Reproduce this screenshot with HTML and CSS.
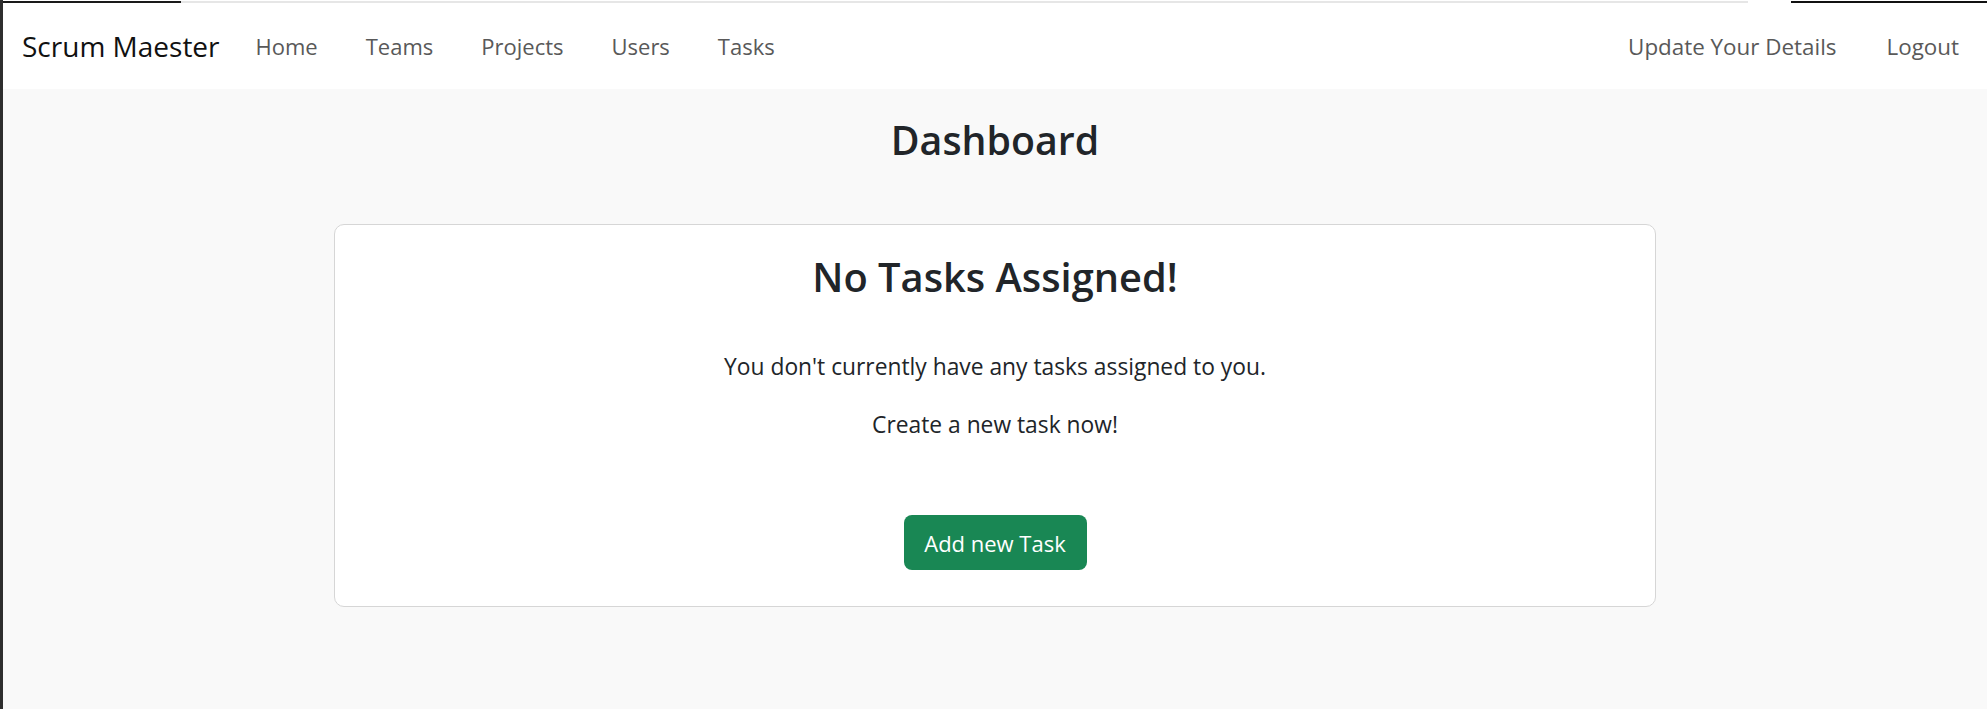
FILE: index.html
```html
<!DOCTYPE html>
<html lang="en">
<head>
<meta charset="utf-8">
<title>Scrum Maester</title>
<link rel="stylesheet" href="styles.css">
</head>
<body>
<div class="frame">
  <div class="side-strip"></div>
  <div class="page">
    <div class="top-strip"></div>
    <nav class="navbar">
      <a class="brand" href="#">Scrum Maester</a>
      <ul class="nav-links">
        <li><a href="#">Home</a></li>
        <li><a href="#">Teams</a></li>
        <li><a href="#">Projects</a></li>
        <li><a href="#">Users</a></li>
        <li><a href="#">Tasks</a></li>
      </ul>
      <ul class="nav-links nav-right">
        <li><a href="#">Update Your Details</a></li>
        <li><a href="#">Logout</a></li>
      </ul>
    </nav>
    <main class="content">
      <h2 class="page-title">Dashboard</h2>
      <section class="card">
        <h2 class="card-title">No Tasks Assigned!</h2>
        <p class="first">You don't currently have any tasks assigned to you.</p>
        <p>Create a new task now!</p>
        <a class="btn-success" href="#">Add new Task</a>
      </section>
    </main>
  </div>
</div>
</body>
</html>
```

FILE: styles.css
```css
* { box-sizing: border-box; }

html, body {
  margin: 0;
  padding: 0;
  height: 100%;
}

body {
  font-family: "Open Sans", "Noto Sans", sans-serif;
  font-size: 22px;
  color: #212529;
  background: #f9f9f9;
}

.frame {
  display: flex;
  min-height: 709px;
}

.side-strip {
  width: 3px;
  flex: 0 0 3px;
  background: #2e2e2e;
}

.page {
  flex: 1;
  display: flex;
  flex-direction: column;
}

.top-strip {
  height: 3px;
  background:
    linear-gradient(to bottom, #ffffff 0, #ffffff 1px, transparent 1px),
    linear-gradient(to right, #1a1a1a 0, #1a1a1a 178px, #e6e6e6 178px, #e6e6e6 1745px, #ffffff 1745px, #ffffff 1788px, #111111 1788px);
}

.navbar {
  height: 86px;
  background: #ffffff;
  display: flex;
  align-items: center;
  padding: 0 18px 0 19px;
}

.brand {
  font-size: 28px;
  color: #111111;
  text-decoration: none;
  margin-right: 36px;
}

.nav-links {
  list-style: none;
  margin: 0;
  padding: 0;
  display: flex;
  gap: 48px;
}

.nav-links a {
  color: #595959;
  text-decoration: none;
  font-size: 22px;
}

.nav-right {
  margin-left: auto;
  margin-right: 10px;
}

.nav-right a {
  font-size: 22.4px;
}

.nav-right li:first-child {
  margin-right: 2px;
}

.content {
  display: flex;
  flex-direction: column;
  align-items: center;
  padding-top: 25px;
}

.page-title {
  margin: 0;
  font-size: 39.3px;
  font-weight: 600;
  line-height: 52px;
}

.card {
  margin-top: 58px;
  width: 1322px;
  background: #ffffff;
  border: 1px solid #d6d6d6;
  border-radius: 10px;
  display: flex;
  flex-direction: column;
  align-items: center;
  padding: 26px 24px 36px;
}

.card-title {
  margin: 0;
  font-size: 39.8px;
  font-weight: 600;
  line-height: 52px;
}

.card p {
  margin: 0;
  line-height: 36px;
  font-size: 22.8px;
}

.card p.first {
  margin-top: 46px;
  margin-bottom: 22px;
}

.btn-success {
  margin-top: 72px;
  display: inline-flex;
  align-items: center;
  justify-content: center;
  width: 183px;
  height: 55px;
  background: #198754;
  color: #ffffff;
  text-decoration: none;
  border-radius: 8px;
  font-size: 22px;
}
```
